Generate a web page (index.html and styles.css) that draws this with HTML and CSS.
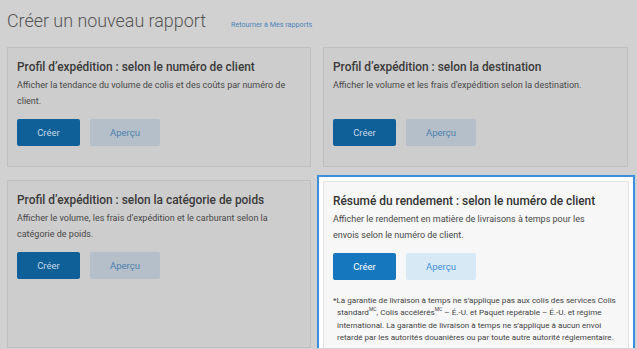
FILE: index.html
```html
<!doctype html>
<html lang="fr">
<head>
	<meta charset="utf-8">
	<title>Créer un nouveau rapport</title>
	<link rel="stylesheet" href="styles.css">
</head>
<body>
	<div class="page">
		<div class="head">
			<h1>Créer un nouveau rapport</h1>
			<a href="#" class="back">Retourner à Mes rapports</a>
		</div>
		<div class="reports">
			<div class="card">
				<h2>Profil d’expédition : selon le numéro de client</h2>
				<p class="desc">Afficher la tendance du volume de colis et des coûts par numéro de client.</p>
				<div class="btns">
					<a href="#" class="btn create">Créer</a>
					<a href="#" class="btn preview">Aperçu</a>
				</div>
			</div>
			<div class="card">
				<h2>Profil d’expédition : selon la destination</h2>
				<p class="desc">Afficher le volume et les frais d’expédition selon la destination.</p>
				<div class="btns">
					<a href="#" class="btn create">Créer</a>
					<a href="#" class="btn preview">Aperçu</a>
				</div>
			</div>
			<div class="card tall">
				<h2>Profil d’expédition : selon la catégorie de poids</h2>
				<p class="desc">Afficher le volume, les frais d’expédition et le carburant selon la catégorie de poids.</p>
				<div class="btns">
					<a href="#" class="btn create">Créer</a>
					<a href="#" class="btn preview">Aperçu</a>
				</div>
			</div>
			<div class="focus">
				<div class="card tall">
					<h2>Résumé du rendement : selon le numéro de client</h2>
					<p class="desc">Afficher le rendement en matière de livraisons à temps pour les envois selon le numéro de client.</p>
					<div class="btns">
						<a href="#" class="btn create">Créer</a>
						<a href="#" class="btn preview">Aperçu</a>
					</div>
					<p class="note">*La garantie de livraison à temps ne s’applique pas aux colis des services Colis<br>
					standard<sup>MC</sup>, Colis accélérés<sup>MC</sup> – É.-U. et Paquet repérable – É.-U. et régime<br>
					international. La garantie de livraison à temps ne s’applique à aucun envoi<br>
					retardé par les autorités douanières ou par toute autre autorité réglementaire.</p>
				</div>
			</div>
		</div>
	</div>
</body>
</html>
```

FILE: styles.css
```css
*{
	margin:0;
	padding:0;
	box-sizing:border-box;
}
body{
	background:#d1d1d1;
	font-family:Roboto, "Liberation Sans", sans-serif;
	color:#3a3a3a;
	overflow:hidden;
}
.page{
	padding:7px 7px 0 7px;
}
.head{
	display:flex;
	align-items:baseline;
	height:40px;
}
.head h1{
	font-size:17.9px;
	font-weight:300;
	color:#555;
	line-height:28px;
}
.head .back{
	margin-left:25px;
	font-size:7.2px;
	color:#4d84bd;
	text-decoration:none;
}
.reports{
	display:grid;
	grid-template-columns:304px 305px;
	grid-auto-rows:120px 168px;
	column-gap:12px;
	row-gap:13px;
}
.card{
	border:1px solid #bfbfbf;
	background:#cdcdcd;
	padding:11px 15px 0 9px;
}
.card h2{
	font-size:11.9px;
	font-weight:500;
	line-height:16px;
	color:#3a3a3a;
	white-space:nowrap;
}
.card .desc{
	font-size:9px;
	line-height:16px;
	margin-top:2px;
	height:42px;
	color:#474747;
}
.btns{
	display:flex;
	gap:10px;
}
.btn{
	display:block;
	height:27px;
	line-height:27px;
	text-align:center;
	font-size:9.5px;
	text-decoration:none;
	border-radius:2px;
}
.btn.create{
	width:63px;
	background:#0f5f98;
	color:#c9d8e6;
}
.btn.preview{
	width:70px;
	background:#b5bfc9;
	color:#4c7fae;
}
.focus{
	margin:-5px -7px 0 -6px;
	border:2px solid #3a8fe0;
	border-bottom:none;
	background:#fff;
	padding:4px 4px 0 4px;
	height:200px;
}
.focus .card{
	height:168px;
	background:#f7f7f7;
	border-color:#e3e3e3;
}
.focus .card h2{
	color:#333;
}
.focus .card .desc{
	padding-right:20px;
}
.focus .btn.create{
	background:#1577bd;
	color:#fff;
}
.focus .btn.preview{
	background:#d8e9f6;
	color:#3f8fd6;
}
.note{
	margin-top:14px;
	font-size:8.1px;
	line-height:12.4px;
	color:#444;
	padding-left:4px;
	text-indent:-4px;
	white-space:nowrap;
}
.note sup{
	font-size:5px;
	line-height:0;
}
```
